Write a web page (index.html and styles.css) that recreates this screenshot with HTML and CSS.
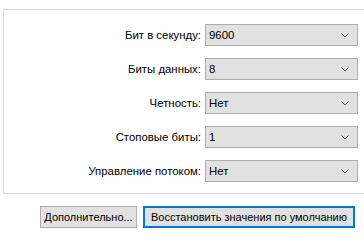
FILE: index.html
```html
<!DOCTYPE html>
<html lang="ru">
<head>
    <meta charset="UTF-8">
    <title>Параметры порта</title>
    <link rel="stylesheet" href="styles.css">
</head>
<body>
    <div class="panel">
        <div class="form">
            <label class="label">Бит в секунду:</label>
            <div class="combo"><span>9600</span><svg class="arrow" width="8" height="5" viewBox="0 0 8 5"><path d="M0.5 0.5 L4 4 L7.5 0.5" fill="none" stroke="#606060" stroke-width="1"/></svg></div>

            <label class="label">Биты данных:</label>
            <div class="combo"><span>8</span><svg class="arrow" width="8" height="5" viewBox="0 0 8 5"><path d="M0.5 0.5 L4 4 L7.5 0.5" fill="none" stroke="#606060" stroke-width="1"/></svg></div>

            <label class="label">Четность:</label>
            <div class="combo"><span>Нет</span><svg class="arrow" width="8" height="5" viewBox="0 0 8 5"><path d="M0.5 0.5 L4 4 L7.5 0.5" fill="none" stroke="#606060" stroke-width="1"/></svg></div>

            <label class="label">Стоповые биты:</label>
            <div class="combo"><span>1</span><svg class="arrow" width="8" height="5" viewBox="0 0 8 5"><path d="M0.5 0.5 L4 4 L7.5 0.5" fill="none" stroke="#606060" stroke-width="1"/></svg></div>

            <label class="label">Управление потоком:</label>
            <div class="combo"><span>Нет</span><svg class="arrow" width="8" height="5" viewBox="0 0 8 5"><path d="M0.5 0.5 L4 4 L7.5 0.5" fill="none" stroke="#606060" stroke-width="1"/></svg></div>
        </div>
    </div>

    <div class="buttons">
        <button class="btn btn-more">Дополнительно...</button>
        <button class="btn btn-default">Восстановить значения по умолчанию</button>
    </div>
</body>
</html>
```

FILE: styles.css
```css
body {
    margin: 0;
    background-color: #ffffff;
    font-family: "Liberation Sans", Arial, sans-serif;
    font-size: 11.4px;
    color: #000000;
    overflow: hidden;
}

.panel {
    box-sizing: border-box;
    margin: 9px 0 0 3px;
    width: 361px;
    border: 1px solid #d9d9d9;
    border-right: none;
    padding: 14px 0 11px 0;
}

.form {
    display: grid;
    grid-template-columns: 197px 153px;
    column-gap: 4px;
    row-gap: 12px;
    align-items: center;
}

.label {
    text-align: right;
}

.combo {
    box-sizing: border-box;
    height: 22px;
    border: 1px solid #adadad;
    background-color: #e1e1e1;
    display: flex;
    align-items: center;
    justify-content: space-between;
    padding: 0 8px 0 3px;
}

.arrow {
    display: block;
}

.buttons {
    display: flex;
    gap: 6px;
    margin: 12px 0 0 40px;
}

.btn {
    box-sizing: border-box;
    height: 22px;
    font-family: "Liberation Sans", Arial, sans-serif;
    font-size: 11px;
    color: #000000;
    background-color: #e1e1e1;
    border: 1px solid #adadad;
    padding: 0 2px;
    margin: 0;
    white-space: nowrap;
}

.btn-more {
    width: 97px;
}

.btn-default {
    width: 212px;
    border: 2px solid #0078d7;
}
```
